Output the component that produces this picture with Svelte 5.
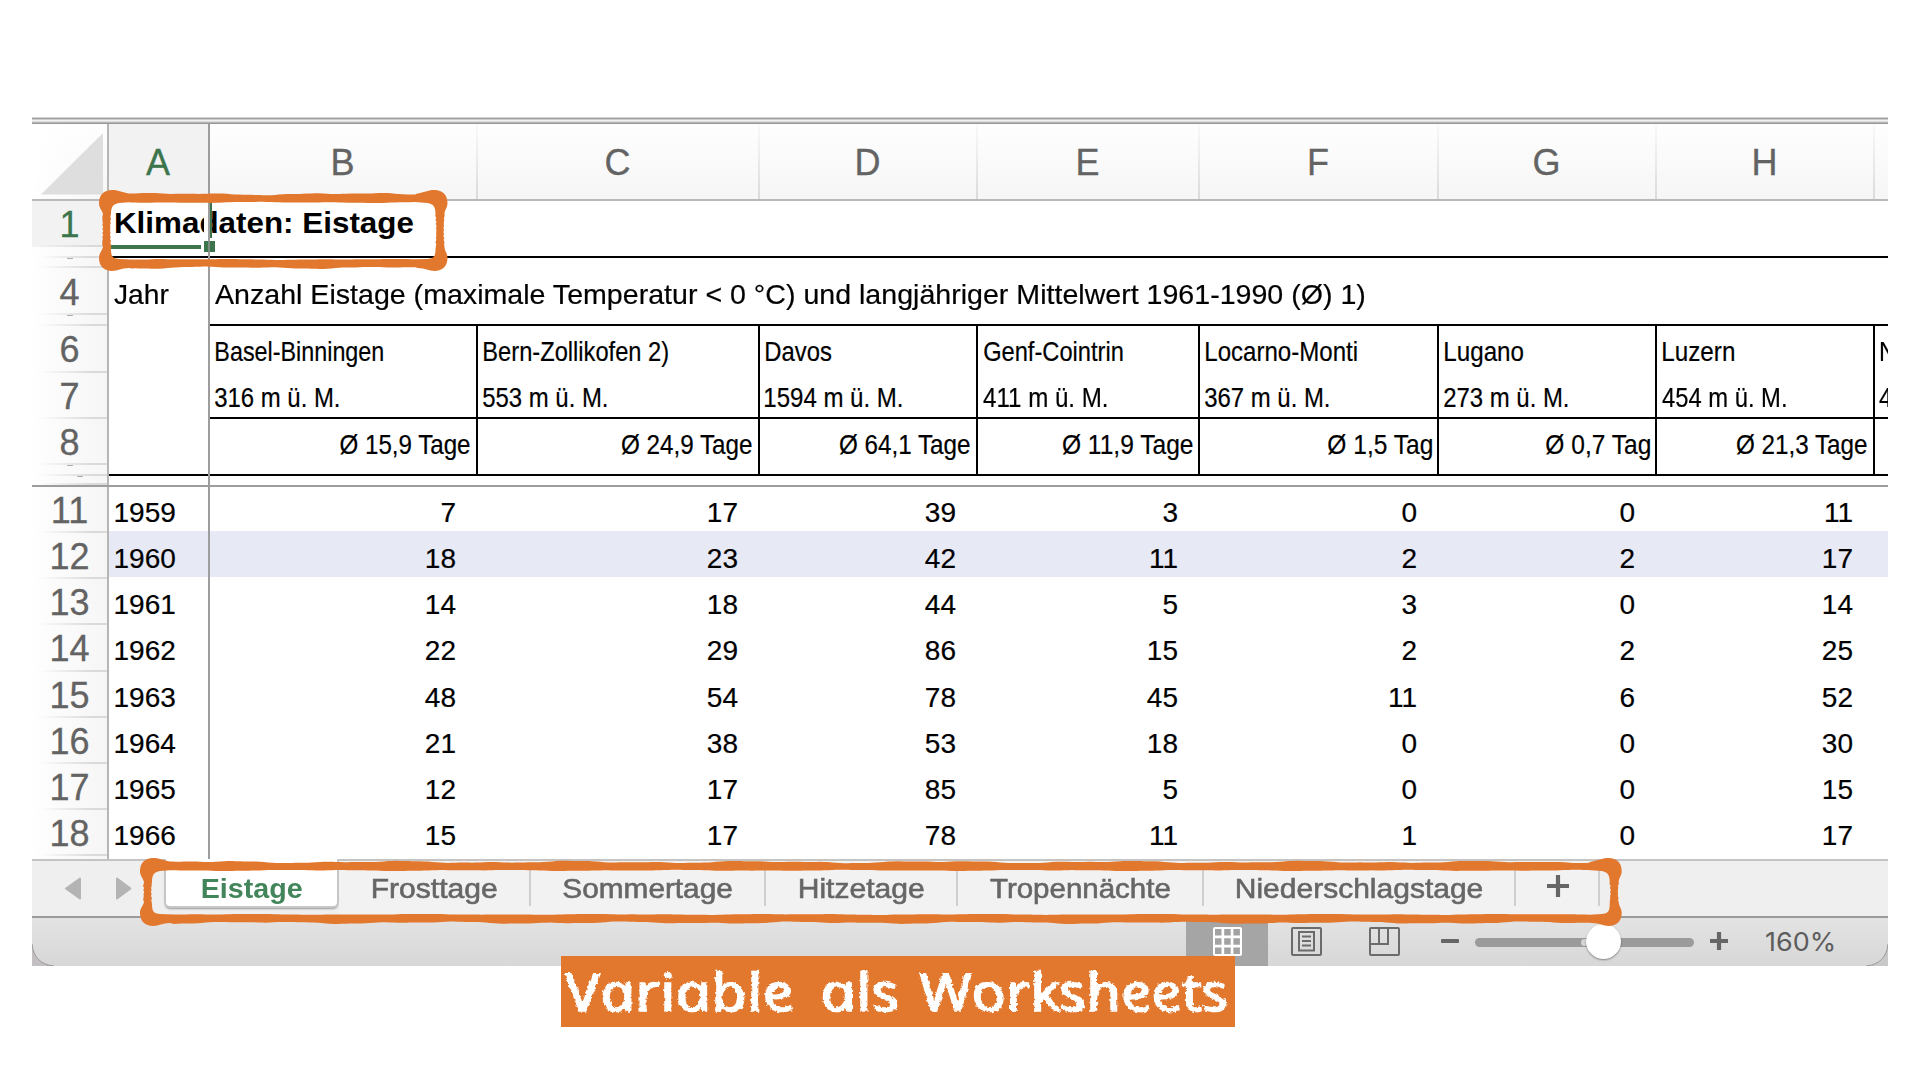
<script>
  const cols = [
    { id: 'B', w: 268, name: 'Basel-Binningen', nw: 167, alt: '316 m ü. M.', aw: 124, avg: 'Ø 15,9 Tage', vw: 131 },
    { id: 'C', w: 282, name: 'Bern-Zollikofen 2)', nw: 184, alt: '553 m ü. M.', aw: 124, avg: 'Ø 24,9 Tage', vw: 131.5 },
    { id: 'D', w: 218, name: 'Davos', nw: 65, alt: '1594 m ü. M.', aw: 137, avg: 'Ø 64,1 Tage', vw: 131.5 },
    { id: 'E', w: 222, name: 'Genf-Cointrin', nw: 138.5, alt: '411 m ü. M.', aw: 124, avg: 'Ø 11,9 Tage', vw: 131.5 },
    { id: 'F', w: 239, name: 'Locarno-Monti', nw: 151, alt: '367 m ü. M.', aw: 124, avg: 'Ø 1,5 Tag', vw: 105 },
    { id: 'G', w: 218, name: 'Lugano', nw: 78.5, alt: '273 m ü. M.', aw: 124, avg: 'Ø 0,7 Tag', vw: 105 },
    { id: 'H', w: 218, name: 'Luzern', nw: 71, alt: '454 m ü. M.', aw: 124, avg: 'Ø 21,3 Tage', vw: 131.5 }
  ];
  const years = [
    [11, 1959, [7, 17, 39, 3, 0, 0, 11]],
    [12, 1960, [18, 23, 42, 11, 2, 2, 17]],
    [13, 1961, [14, 18, 44, 5, 3, 0, 14]],
    [14, 1962, [22, 29, 86, 15, 2, 2, 25]],
    [15, 1963, [48, 54, 78, 45, 11, 6, 52]],
    [16, 1964, [21, 38, 53, 18, 0, 0, 30]],
    [17, 1965, [12, 17, 85, 5, 0, 0, 15]],
    [18, 1966, [15, 17, 78, 11, 1, 0, 17]]
  ];
  const tabs = [
    { t: 'Eistage', w: 175, tw: 100, active: true },
    { t: 'Frosttage', w: 192, tw: 124 },
    { t: 'Sommertage', w: 235, tw: 168.5 },
    { t: 'Hitzetage', w: 192, tw: 124 },
    { t: 'Tropennächte', w: 246, tw: 180 },
    { t: 'Niederschlagstage', w: 312, tw: 245.5 }
  ];

  // Scales a text horizontally so that its ink spans the given width.
  function fit(node, { w, align = 'left', skew = 0 }) {
    const cs = getComputedStyle(node);
    const ctx = document.createElement('canvas').getContext('2d');
    ctx.font = `${cs.fontStyle} ${cs.fontWeight} ${cs.fontSize} ${cs.fontFamily}`;
    const m = ctx.measureText(node.textContent);
    const s = w / (m.actualBoundingBoxLeft + m.actualBoundingBoxRight);
    let dx = 0;
    if (align === 'left') dx = m.actualBoundingBoxLeft * s;
    if (align === 'right') dx = (m.width - m.actualBoundingBoxRight) * s;
    node.style.transformOrigin = align;
    node.style.transform = `translateX(${dx}px) scaleX(${s})` + (skew ? ` skewX(${skew}deg)` : '');
  }

  // Brush-stroke rectangle with thick corners and uneven edges.
  function brush(w, h, seed) {
    const n = (x, k) => Math.sin(x / 13 + k + seed) * 0.5 + Math.sin(x / 29 + k * 2.3) * 0.7 + Math.sin(x / 5.3 + k) * 0.2;
    const j = (y, k) => Math.sin(y * 1.7 + k) * 0.5;
    const edge = (a, b, f, step) => {
      let s = '';
      const d = a < b ? step : -step;
      for (let x = a; d > 0 ? x <= b : x >= b; x += d) s += 'L' + f(x) + ' ';
      return s;
    };
    const p = (x, y) => x.toFixed(1) + ' ' + y.toFixed(1);
    const mid = (y) => 0.8 * Math.sin((Math.PI * (y - 24)) / (h - 48));
    const o =
      'M4 24 C3 20 0 18 0 13 C0 5 5 0 13 0 C19 0 22 2 30 3.5 ' +
      edge(32, w - 32, (x) => p(x, 4 + n(x, 1)), 4) +
      `L${w - 30} 3.5 C${w - 22} 2 ${w - 19} 0 ${w - 13} 0 C${w - 5} 0 ${w} 5 ${w} 13 C${w} 18 ${w - 3} 20 ${w - 3} 24 ` +
      edge(26, h - 26, (y) => p(w - 3 - mid(y) + j(y, 2), y), 2) +
      `L${w - 3} ${h - 24} C${w - 3} ${h - 20} ${w} ${h - 18} ${w} ${h - 13} C${w} ${h - 5} ${w - 5} ${h} ${w - 13} ${h} C${w - 19} ${h} ${w - 22} ${h - 3} ${w - 30} ${h - 3} ` +
      edge(w - 32, 32, (x) => p(x, h - 3.3 + n(x, 3)), 4) +
      `L30 ${h - 3} C22 ${h - 3} 19 ${h} 13 ${h} C5 ${h} 0 ${h - 5} 0 ${h - 13} C0 ${h - 18} 3 ${h - 20} 4 ${h - 24} ` +
      edge(h - 26, 26, (y) => p(3 + mid(y) + j(y, 1), y), 2) + 'Z ';
    const i =
      'M12 24 C12 17 14 14 20 13 L30 12.2 ' +
      edge(32, w - 32, (x) => p(x, 12.4 + n(x, 5) * 0.5), 4) +
      `L${w - 20} 13 C${w - 14} 14 ${w - 12} 17 ${w - 12} 24 ` +
      edge(26, h - 26, (y) => p(w - 12 + mid(y) + j(y, 4), y), 2) +
      `L${w - 12} ${h - 22} C${w - 12} ${h - 14} ${w - 14} ${h - 12.5} ${w - 20} ${h - 12} ` +
      edge(w - 32, 32, (x) => p(x, h - 11.6 + n(x, 6) * 0.4), 4) +
      `L20 ${h - 12} C14 ${h - 12.5} 12 ${h - 14} 12 ${h - 22} ` +
      edge(h - 26, 26, (y) => p(12 - mid(y) + j(y, 3), y), 2) + 'Z';
    return o + i;
  }
</script>

{#snippet gap(h, kind)}
  <div class="row {kind}" style:height="{h}px">
    <div class="rh"><i class="speck"></i></div>
    <div class="a"></div>
    {#each cols as c}<div class="c" style:width="{c.w}px"></div>{/each}
    <div class="c last"></div>
  </div>
{/snippet}

<main>
  <div class="window">
    <div class="rule"></div>

    <div class="row heads">
      <div class="corner"><svg width="62" height="62" viewBox="0 0 62 62"><path d="M62 0V61.500H0Z" fill="#dedede" /></svg></div>
      <div class="a">A</div>
      {#each cols as c}<div class="c" style:width="{c.w}px">{c.id}</div>{/each}
      <div class="c last"></div>
    </div>

    <div class="row r1">
      <div class="rh sel">1</div>
      <div class="a"><b use:fit={{ w: 298.5 }}>Klimadaten: Eistage</b></div>
    </div>
    {@render gap(11, 'black all plain nospeck')}
    {@render gap(10, 'plain')}
    <div class="row r4">
      <div class="rh">4</div>
      <div class="a"><span use:fit={{ w: 54.5 }}>Jahr</span></div>
      <div class="wide"><span use:fit={{ w: 1150 }}>Anzahl Eistage (maximale Temperatur &lt; 0 °C) und langjähriger Mittelwert 1961-1990 (Ø) 1)</span></div>
    </div>
    {@render gap(11, 'black plain')}
    <div class="row boxed names">
      <div class="rh">6</div>
      <div class="a"></div>
      {#each cols as c}<div class="c" style:width="{c.w}px"><span use:fit={{ w: c.nw }}>{c.name}</span></div>{/each}
      <div class="c last"><span class="cut">N</span></div>
    </div>
    <div class="row boxed black alts">
      <div class="rh">7</div>
      <div class="a"></div>
      {#each cols as c}<div class="c" style:width="{c.w}px"><span use:fit={{ w: c.aw }}>{c.alt}</span></div>{/each}
      <div class="c last"><span class="cut">4</span></div>
    </div>
    <div class="row boxed avg">
      <div class="rh">8</div>
      <div class="a"></div>
      {#each cols as c}<div class="c" style:width="{c.w}px"><span use:fit={{ w: c.vw, align: 'right' }}>{c.avg}</span></div>{/each}
      <div class="c last"></div>
    </div>
    {@render gap(11, 'black all boxed')}
    {@render gap(11, 'freeze plain shift')}

    {#each years as [n, y, vals]}
      <div class="row year" class:tint={n === 12}>
        <div class="rh">{n}</div>
        <div class="a">{y}</div>
        {#each cols as c, i}<div class="c" style:width="{c.w}px">{vals[i]}</div>{/each}
        <div class="c last"></div>
      </div>
    {/each}
    <div class="row tail"><div class="rh"></div><div class="a"></div></div>

    <div class="tabs">
      <svg class="arrows" width="132" height="55" viewBox="0 0 132 55">
        <path d="M34 27.500L48 17.500V37.500Z M98.500 27.500L85 17.500V37.500Z" fill="#b4b4b4" stroke="#b4b4b4" stroke-width="2" stroke-linejoin="round" />
      </svg>
      {#each tabs as t}
        <div class="tab" class:active={t.active} style:width="{t.w}px"><span use:fit={{ w: t.tw, align: 'center' }}>{t.t}</span></div>
      {/each}
      <div class="tab add"><svg width="22" height="22" viewBox="0 0 22 22"><path d="M11 0V22M0 11H22" stroke="#666" stroke-width="4.200" /></svg></div>
    </div>

    <div class="status">
      <div class="view">
        <svg width="29" height="29" viewBox="0 0 29 29"><rect width="29" height="29" rx="2" fill="#fff" /><path d="M2 2h6.500v6.500H2zM11.200 2h6.500v6.500h-6.500zM20.400 2h6.500v6.500h-6.500zM2 11.200h6.500v6.500H2zM11.200 11.200h6.500v6.500h-6.500zM20.400 11.200h6.500v6.500h-6.500zM2 20.400h6.500v6.500H2zM11.200 20.400h6.500v6.500h-6.500zM20.400 20.400h6.500v6.500h-6.500z" fill="#a2a2a2" /></svg>
      </div>
      <svg class="page" width="31" height="29" viewBox="0 0 31 29" fill="none" stroke="#6b6b6b" stroke-width="2"><rect x="1" y="1" width="29" height="27" rx="1" /><rect x="8" y="5" width="15" height="18.500" /><path d="M11 9.500h9M11 14h9M11 18.500h9" /></svg>
      <svg class="break" width="31" height="29" viewBox="0 0 31 29" fill="none" stroke="#6b6b6b" stroke-width="2"><rect x="1" y="1" width="29" height="27" rx="1" /><path d="M10 1V16.500M1 17H19V1" /></svg>
      <div class="minus"></div>
      <div class="track"><div class="tick"></div><div class="knob"></div></div>
      <svg class="plus" width="18" height="18" viewBox="0 0 18 18"><path d="M9 0V18M0 9H18" stroke="#666" stroke-width="4.200" /></svg>
      <div class="zoom"><span use:fit={{ w: 67.5 }}>160%</span></div>
      <svg class="edge left" width="22" height="22" viewBox="0 0 22 22"><path d="M0 0C1 13 9 21 22 22H0Z" fill="#c3bfc2" /><path d="M0 0C1 13 9 21 22 22" fill="none" stroke="#999" /></svg>
      <svg class="edge right" width="22" height="22" viewBox="0 0 22 22"><path d="M22 0C21 13 13 21 0 22H22Z" fill="#c9c9c9" /><path d="M22 0C21 13 13 21 0 22" fill="none" stroke="#999" /></svg>
    </div>

    <div class="selection">
      <div class="mask"></div>
      <div class="side"></div>
      <div class="under"></div>
      <div class="handle"></div>
    </div>
  </div>

  <svg class="mark title" width="349" height="81" viewBox="0 0 349 81"><path d={brush(348.5, 81, 0.6)} fill="#e2782e" fill-rule="evenodd" /></svg>
  <svg class="mark sheets" width="1482" height="68" viewBox="0 0 1482 68"><path d={brush(1481.7, 68, 2)} fill="#e2782e" fill-rule="evenodd" /></svg>

  <div class="label">
    <svg class="defs" width="0" height="0"><filter id="chalk" x="-5%" y="-10%" width="110%" height="120%"><feTurbulence type="fractalNoise" baseFrequency="0.3" numOctaves="2" seed="4" /><feDisplacementMap in="SourceGraphic" scale="4" xChannelSelector="R" yChannelSelector="G" /></filter></svg>
    <div class="words">
      <div class="w1"><span use:fit={{ w: 222, skew: 12 }}>Variable</span></div>
      <div class="w2"><span use:fit={{ w: 76, skew: 12 }}>als</span></div>
      <div class="w3"><span use:fit={{ w: 302, skew: 12 }}>Worksheets</span></div>
    </div>
  </div>
</main>

<style>
  :global(body) { margin: 0; background: #fff; }
  main { position: relative; width: 1920px; height: 1080px; overflow: hidden; padding: 117px 32px 0; box-sizing: border-box; font-family: 'Liberation Sans', Arial, sans-serif; color: #000; }
  main * { box-sizing: border-box; }
  svg { display: block; flex: none; }
  .window { position: relative; width: 1856px; height: 849px; overflow: hidden; }
  .rule { height: 7px; background: linear-gradient(#d0d0d0 0 1px, #a0a0a2 1px 2px, #ccc 2px 3px, #f1f1f1 3px 4px, #dcdcdc 4px 5px, #b5b5b5 5px 6px, #989898 6px 7px); }

  .row { display: flex; height: 46px; font-size: 28px; line-height: 51px; white-space: nowrap; }
  .row > div { flex: none; }
  span, b { display: inline-block; }
  .row span { -webkit-text-stroke: 0.2px #000; }
  .rh { width: 77px; border-right: 2px solid #b6b6b6; text-align: center; font-size: 36px; line-height: 47px; color: #636363; position: relative; background: linear-gradient(90deg, #fff 5%, #dadada 80%) bottom / 100% 2px no-repeat, linear-gradient(90deg, #fefefe, #f6f6f6); -webkit-text-stroke: 0.3px #636363; }
  .rh.sel { color: #3c754c; -webkit-text-stroke-color: #3c754c; background: linear-gradient(90deg, #f4f4f4, #dadada 80%) bottom / 100% 2px no-repeat, #f2f2f2; }
  .a { width: 101px; border-right: 2px solid #9d9d9d; padding-left: 4px; }
  .c.last { width: 13px; overflow: hidden; }

  .heads { height: 77px; font-size: 36px; line-height: 78px; text-align: center; text-indent: -1px; color: #636363; background: linear-gradient(#fefefe, #f6f6f6); border-bottom: 2px solid #b9b9b9; -webkit-text-stroke: 0.3px; }
  .corner { width: 77px; border-right: 2px solid #b6b6b6; padding: 9px 0 0 9px; background: linear-gradient(90deg, #fff, transparent); }
  .heads .a { color: #3c754c; background: #f2f2f2; padding: 0; }
  .heads .c { border-right: 2px solid; border-image: linear-gradient(#fafafa, #dadada) 1; }
  .heads .c.last { border: 0; }

  .r1 { line-height: 38px; }
  .r1 b { font-size: 29.5px; line-height: 44px; margin: 0 0 0 2px; vertical-align: top; }
  .r1 .a { border-color: transparent; }
  .r4 { height: 47px; line-height: 53px; }
  .r4 .rh { line-height: 50px; }
  .r4 .a { padding-left: 5px; }
  .wide { padding-left: 5px; }

  .speck { position: absolute; left: 35px; top: 0; width: 6px; height: 1px; background: #aaa; border-radius: 1px; }
  .nospeck .speck { display: none; }
  .shift .speck { left: 45px; }
  .black > .c, .black.all > .a { background: linear-gradient(#000, #000) bottom / 100% 2px no-repeat; }

  .boxed > .c { border-right: 2px solid #000; padding-left: 5px; }
  .names > .c { padding-left: 6px; }
  .boxed > .c.last { border-right: 0; }
  .names, .alts { height: 46.500px; }
  .alts { line-height: 50px; }
  .names .rh { line-height: 48px; }
  .cut { transform: scaleX(0.86); transform-origin: left; margin-left: -1px; }
  .names .cut { margin-left: -2px; }
  .avg .c { text-align: right; padding-right: 5.500px; }
  .freeze { background: #fff; border-bottom: 2px solid #9d9d9d; }

  .year { height: 46.140px; -webkit-text-stroke: 0.2px #000; }
  .year .a { padding-left: 4.500px; }
  .year .c { text-align: right; padding-right: 22px; }
  .tint .a, .tint .c { height: 46px; margin-top: -2px; line-height: 55px; background: #e7e9f5; }
  .tint .a { height: 49px; background: linear-gradient(#e7e9f5, #e7e9f5) top / 100% 46px no-repeat; }
  .tail { height: 2.900px; }
  .tail .rh { background: linear-gradient(90deg, #fefefe, #f6f6f6); }

  .tabs { display: flex; height: 59px; border-top: 2px solid #c4c4c4; border-bottom: 2px solid #9b9b9b; background: #efefef; color: #666; font-size: 28.5px; line-height: 55px; }
  .arrows { width: 132px; }
  .tab { position: relative; flex: none; text-align: center; background: #f2f2f2; padding-right: 2px; -webkit-text-stroke: 0.6px #666; }
  .tab::after { content: ''; position: absolute; right: 0; top: 2px; width: 2px; height: 43px; background: #cfcfcf; }
  .tab.active { margin-top: -2px; padding: 0; height: 49px; line-height: 58px; background: #fff; color: #42855a; font-weight: bold; border: 2px solid #c6c6c6; border-top: 0; border-radius: 0 0 6px 6px; box-shadow: 0 2px 2px -1px #999; -webkit-text-stroke: 0; }
  .tab.active::after { display: none; }
  .tab.add { width: 84px; padding: 14px 0 0 31px; }

  .status { position: relative; display: flex; height: 48px; background: linear-gradient(#e3e3e3, #d7d7d7); }
  .view { width: 82px; margin-left: 1154px; padding: 9px 0 0 27px; background: #a5a5a5; }
  .page { margin: 9px 0 0 23px; }
  .break { margin: 9px 0 0 47px; }
  .minus { width: 18px; height: 4px; margin: 21px 0 0 41px; background: #666; border-radius: 1px; }
  .track { position: relative; width: 219px; height: 9px; margin: 20px 0 0 16px; border-radius: 5px; background: #9b9b9b; }
  .tick { position: absolute; left: 106px; top: 1px; width: 8px; height: 7px; border-radius: 4px; background: #d5d5d5; }
  .knob { position: absolute; left: 111px; top: -14px; width: 35px; height: 35px; border-radius: 50%; background: #fff; box-shadow: 0 1px 2px #0006; }
  .plus { margin: 14px 0 0 16px; }
  .zoom { margin-left: 38px; font-family: Inter, sans-serif; font-size: 26px; line-height: 48px; color: #5c5c5c; }
  .edge { position: absolute; bottom: 0; }
  .edge.left { left: 0; }
  .edge.right { right: 0; }

  .selection { position: absolute; left: 77px; top: 84px; width: 110px; height: 56px; }
  .selection > div { position: absolute; }
  .mask { left: 95px; top: 0; width: 6px; height: 55px; background: linear-gradient(90deg, #fff 4px, #9d9d9d 4px); }
  .side { left: 101px; top: 0; width: 2px; height: 37px; background: #3c754c; }
  .under { left: 0; top: 44px; width: 92px; height: 4px; background: #3c754c; }
  .handle { left: 95px; top: 40px; width: 11px; height: 11px; background: linear-gradient(90deg, transparent 4px, #7d8f82 4px 6px, transparent 6px), #3c754c; }

  .mark { position: absolute; overflow: visible; }
  .title { left: 99px; top: 190px; }
  .sheets { left: 140px; top: 858px; }

  .label { position: absolute; left: 561px; top: 956px; width: 674px; height: 71px; background: #e2782e; }
  .defs { position: absolute; }
  .words { display: flex; filter: url(#chalk); color: #fff; font: italic 500 52px/70px 'Open Sans', sans-serif; -webkit-text-stroke: 1.600px #fff; padding-left: 8px; }
  .w1 { width: 252px; }
  .w2 { width: 103px; }
  .w3 { width: 300px; }
</style>
